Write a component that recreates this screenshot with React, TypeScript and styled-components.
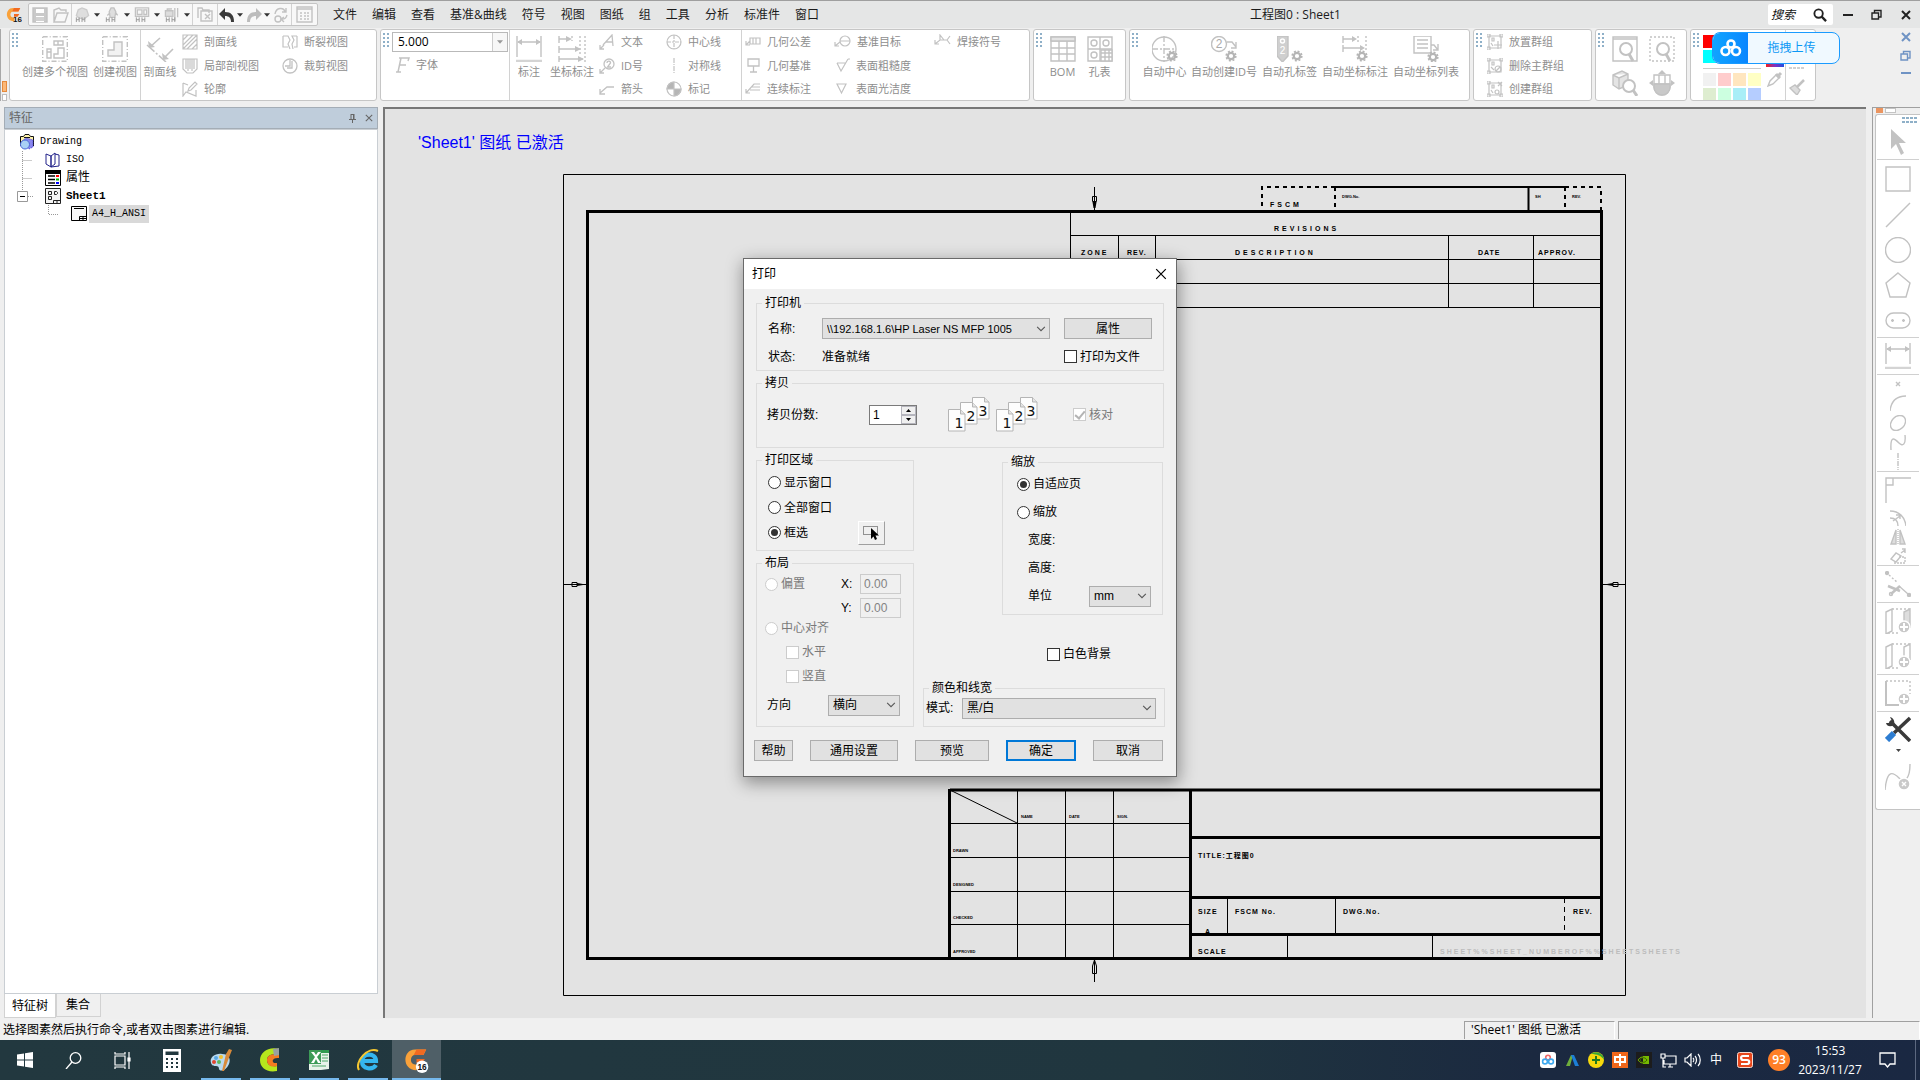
import React from "react";
import styled, { createGlobalStyle } from "styled-components";

const ui = `"Open Sans", "Noto Sans CJK SC", sans-serif`;
const dlg = `"Liberation Sans", "Noto Sans CJK SC", sans-serif`;
const song = `"Liberation Mono", "Noto Sans CJK SC", monospace`;

const Global = createGlobalStyle`
  * { box-sizing: border-box; }
  body { margin: 0; font: 12px/16px ${ui}; color: #1b1b1b; background: #efefef; overflow: hidden; }
  button, input, select { font: inherit; color: inherit; margin: 0; }
  svg { display: block; flex: none; }
  h1, h2, p { margin: 0; font: inherit; }
`;

const Window = styled.div`
  display: flex;
  flex-direction: column;
  height: 100vh;
`;

/* ---------- top bar ---------- */

const TopBar = styled.header`
  display: flex;
  align-items: center;
  height: 28px;
  flex: none;
  border-top: 1px solid #9f9f9f;
  background: #e5e6e6;
`;
const Logo = styled.div`
  padding: 0 6px;
`;
const QuickBar = styled.div`
  display: flex;
  align-items: center;
  width: 290px;
  height: 23px;
  border: 1px solid #c4c4c4;
  border-radius: 2px;
  background: #f8f8f8;
`;
const QuickButton = styled.button<{ $w: number }>`
  display: flex;
  align-items: center;
  justify-content: center;
  width: ${(p) => p.$w}px;
  height: 21px;
  padding: 0;
  border: 0;
  background: none;
`;
const Rule = styled.i`
  width: 1px;
  align-self: stretch;
  background: #d2d2d2;
  flex: none;
`;
const Menu = styled.nav`
  display: flex;
  gap: 15px;
  padding-left: 15px;
`;
const MenuLink = styled.a`
  color: #1b1b1b;
  text-decoration: none;
  white-space: nowrap;
`;
const DocTitle = styled.h1`
  flex: 1;
  padding-left: 4px;
  text-align: center;
`;
const SearchBox = styled.label`
  display: flex;
  align-items: center;
  width: 65px;
  height: 21px;
  border-radius: 2px;
  background: #fff;
  input {
    width: 45px;
    padding: 0 3px;
    border: 0;
    background: none;
    font-style: italic;
    outline: 0;
  }
  input::placeholder { color: #111; opacity: 1; }
`;
const WinButton = styled.button`
  display: flex;
  align-items: center;
  justify-content: center;
  width: 29px;
  height: 20px;
  padding: 0;
  border: 0;
  background: none;
`;

/* ---------- ribbon ---------- */

const Ribbon = styled.section`
  position: relative;
  display: flex;
  gap: 3px;
  height: 76px;
  flex: none;
  padding: 1px 0 3px;
  background: #efefef;
`;
const Rail = styled.div`
  display: flex;
  flex-direction: column;
  justify-content: flex-end;
  gap: 2px;
  width: 6px;
  padding-left: 1px;
  border-left: 1px solid #a8a8a8;
`;
const RailMark = styled.i<{ $hot?: boolean }>`
  height: ${(p) => (p.$hot ? 11 : 7)}px;
  width: 5px;
  border: 1px solid ${(p) => (p.$hot ? "#e58a3c" : "#bdbdbd")};
  background: ${(p) => (p.$hot ? "#fbb878" : "#fff")};
`;
const Group = styled.div<{ $w: number }>`
  display: flex;
  width: ${(p) => p.$w}px;
  flex: none;
  padding-left: 2px;
  border: 1px solid #c6c6c6;
  border-radius: 3px;
  background: #fff;
  overflow: hidden;
`;
const BigTool = styled.button<{ $w: number }>`
  display: flex;
  flex-direction: column;
  align-items: center;
  gap: 3px;
  width: ${(p) => p.$w}px;
  flex: none;
  padding: 6px 0 0;
  border: 0;
  background: none;
  font-size: 11px;
  line-height: 14px;
  color: #8e8e8e;
  white-space: nowrap;
`;
const ToolGrid = styled.div<{ $cols: string }>`
  display: grid;
  grid-template-columns: ${(p) => p.$cols};
  grid-template-rows: 24px 23px 24px;
  grid-auto-flow: column;
  margin-left: 3px;
`;
const SmallTool = styled.button`
  display: flex;
  align-items: center;
  gap: 6px;
  padding: 0;
  border: 0;
  background: none;
  font-size: 11px;
  line-height: 14px;
  color: #8e8e8e;
  white-space: nowrap;
`;
const FontColumn = styled.div`
  width: 118px;
  padding: 2px 1px;
`;
const SizeBox = styled.label`
  display: flex;
  align-items: center;
  height: 20px;
  border: 1px solid #b9b9b9;
  input {
    flex: 1;
    min-width: 0;
    padding: 0 5px;
    border: 0;
    outline: 0;
    color: #000;
  }
  button {
    align-self: stretch;
    display: flex;
    align-items: center;
    justify-content: center;
    width: 15px;
    padding: 0;
    border: 0;
    border-left: 1px solid #ccc;
    background: #f7f7f7;
  }
`;
const FontTool = styled(SmallTool)`
  height: 26px;
  padding-left: 2px;
`;
const ViewGrid = styled.div`
  display: grid;
  grid-template-columns: 37px 37px;
  grid-template-rows: 34px 34px;
  justify-items: center;
  align-items: center;
  padding-top: 2px;
`;
const PlainButton = styled.button`
  display: flex;
  padding: 0;
  border: 0;
  background: none;
`;
const Palette = styled.div`
  display: grid;
  grid-template-columns: repeat(4, 13px);
  grid-template-rows: 13px 13px 6px 13px 13px;
  gap: 2px;
  align-content: start;
  padding: 5px 3px 0 2px;
`;
const Swatch = styled.button<{ $c: string }>`
  padding: 0;
  border: 0;
  background: ${(p) => p.$c};
`;
const PaletteRule = styled.i`
  grid-column: 1 / -1;
  align-self: center;
  height: 1px;
  background: #c9c9c9;
`;
const PaletteTools = styled.div`
  display: flex;
  flex-direction: column;
  align-items: center;
  justify-content: flex-end;
  gap: 4px;
  width: 21px;
  padding-bottom: 13px;
`;
const BrushTools = styled(PaletteTools)`
  gap: 9px;
  padding-bottom: 5px;
`;
const Spectrum = styled.i`
  width: 18px;
  height: 6px;
  background: linear-gradient(90deg, #f02020, #8030c0, #2050e0);
`;
const MdiButtons = styled.div`
  display: flex;
  flex-direction: column;
  justify-content: space-between;
  margin-left: auto;
  height: 52px;
`;
const MdiButton = styled(WinButton)`
  height: 16px;
`;
const Upload = styled.button`
  position: absolute;
  top: 4px;
  right: 80px;
  display: flex;
  align-items: center;
  width: 128px;
  height: 32px;
  padding: 0;
  border: 1px solid #1a9bff;
  border-radius: 8px;
  overflow: hidden;
  background: #f0f9ff;
  color: #0b98f5;
  span { flex: 1; padding-right: 4px; }
`;
const UploadMark = styled.i`
  display: flex;
  align-items: center;
  justify-content: center;
  width: 35px;
  height: 32px;
  background: linear-gradient(90deg, #10a5ff, #0a86ff);
`;

/* ---------- docks and canvas ---------- */

const Main = styled.main`
  display: grid;
  grid-template-columns: 379px minmax(0, 1fr) 48px;
  flex: 1;
  min-height: 0;
  padding: 3px 0 1px 4px;
`;
const FeatureDock = styled.aside`
  display: flex;
  flex-direction: column;
  min-height: 0;
  margin-right: 5px;
`;
const DockHead = styled.div`
  display: flex;
  align-items: center;
  gap: 8px;
  height: 22px;
  padding: 0 4px;
  border: 1px solid #a4adb6;
  background: #bfcddb;
  color: #666;
  h2 { flex: 1; }
`;
const TreePane = styled.div`
  flex: 1;
  padding: 3px 0 0 12px;
  border: 1px solid #c9ced3;
  background: #fff;
  font-family: ${song};
  font-size: 10px;
  color: #000;
`;
const TreeRow = styled.div<{ $root?: boolean }>`
  display: flex;
  align-items: center;
  gap: 2px;
  height: 18px;
  padding-left: ${(p) => (p.$root ? 2 : 0)}px;
`;
const TreeLabel = styled.span<{ $bold?: boolean; $on?: boolean; $cjk?: boolean }>`
  padding: 0 3px;
  line-height: 18px;
  font-size: ${(p) => (p.$cjk ? 12 : p.$bold ? 11 : 10)}px;
  font-weight: ${(p) => (p.$bold ? 700 : 400)};
  background: ${(p) => (p.$on ? "#d9d9d9" : "none")};
`;
const Tabs = styled.div`
  display: flex;
  align-items: flex-start;
  height: 24px;
`;
const Tab = styled.button<{ $on?: boolean }>`
  height: ${(p) => (p.$on ? 24 : 23)}px;
  padding: 0 7px;
  border: 1px solid #d2d2d2;
  border-top: 0;
  background: ${(p) => (p.$on ? "#fff" : "#f0f0f0")};
  color: #000;
  & + & { padding: 0 10px 0 9px; }
`;
const Canvas = styled.section`
  display: grid;
  grid-template: minmax(0, 1fr) / minmax(0, 1fr);
  margin-right: 6px;
  border-top: 2px solid #777;
  border-left: 2px solid #777;
  background: #e3e3e3;
  & > * { grid-area: 1 / 1; }
`;
const ActiveNote = styled.p`
  padding: 24px 33px;
  font: 16px/20px ${dlg};
  color: #00f;
`;
const Sheet = styled.svg`
  width: 100%;
  height: 100%;
  overflow: hidden;
`;
const Lettering = styled.text<{ $track?: number; $tiny?: boolean; $faint?: boolean }>`
  font: ${(p) => (p.$tiny ? "bold 4px" : "bold 7px")} ${dlg};
  letter-spacing: ${(p) => p.$track || 0}px;
  fill: ${(p) => (p.$faint ? "#bcbcbc" : "#000")};
`;
const SketchDock = styled.aside`
  display: flex;
  flex-direction: column;
  border-top: 1px solid #a0a0a0;
  border-left: 1px solid #a0a0a0;
`;
const DockTabs = styled.div`
  display: flex;
  gap: 2px;
  height: 6px;
  padding-left: 3px;
`;
const DockTab = styled.i<{ $hot?: boolean }>`
  width: ${(p) => (p.$hot ? 7 : 11)}px;
  height: 5px;
  border: 1px solid ${(p) => (p.$hot ? "#eb9560" : "#c4c4c4")};
  background: ${(p) => (p.$hot ? "#eb9560" : "#fff")};
`;
const SketchPanel = styled.div`
  display: flex;
  flex-direction: column;
  align-items: center;
  margin-left: 2px;
  height: 696px;
  border: 1px solid #c4c4c4;
  border-right: 0;
  border-radius: 3px 0 0 3px;
  background: #fff;
`;
const SketchGrip = styled.div`
  align-self: flex-end;
  padding: 2px 2px 0 0;
`;
const SketchTool = styled.button<{ $h: number }>`
  display: flex;
  align-items: center;
  justify-content: center;
  width: 42px;
  height: ${(p) => p.$h}px;
  padding: 0;
  border: 0;
  background: none;
`;
const SketchRule = styled.i`
  width: 42px;
  height: 1px;
  background: #d0d0d0;
`;

/* ---------- status bar and taskbar ---------- */

const StatusBar = styled.footer`
  display: flex;
  align-items: center;
  gap: 3px;
  height: 21px;
  flex: none;
  padding-top: 1px;
  color: #000;
  background: #f0f0f0;
  p { flex: 1; padding-left: 3px; }
`;
const StatusCell = styled.div<{ $w: number }>`
  width: ${(p) => p.$w}px;
  height: 18px;
  padding-left: 6px;
  border-top: 1px solid #a0a0a0;
  border-left: 1px solid #a0a0a0;
  border-right: 1px solid #fff;
`;
const Taskbar = styled.div`
  display: flex;
  align-items: center;
  height: 40px;
  flex: none;
  background: linear-gradient(90deg, #22383f, #20363f 60%, #1b2940 80%, #1a2842);
  color: #fff;
`;
const Task = styled.button<{ $open?: boolean; $on?: boolean }>`
  display: flex;
  align-items: center;
  justify-content: center;
  width: 49px;
  height: 40px;
  padding: 0;
  border: 0;
  background: ${(p) =>
    p.$on
      ? "linear-gradient(#76b9ed, #76b9ed) bottom / 100% 2px no-repeat #4f5f67"
      : p.$open
        ? "linear-gradient(#76b9ed, #76b9ed) bottom / 40px 2px no-repeat"
        : "none"};
`;
const Tray = styled.div`
  display: flex;
  align-items: center;
  margin-left: auto;
  height: 40px;
`;
const TrayButton = styled.button<{ $w?: number }>`
  display: flex;
  align-items: center;
  justify-content: center;
  width: ${(p) => p.$w || 24}px;
  height: 40px;
  padding: 0;
  border: 0;
  background: none;
  color: #fff;
`;
const Badge = styled.span`
  width: 22px;
  height: 22px;
  border-radius: 11px;
  background: #ff7f27;
  line-height: 22px;
  font-weight: 600;
`;
const Clock = styled.time`
  width: 68px;
  text-align: center;
  line-height: 19px;
`;
const ShowDesktop = styled.i`
  width: 5px;
  height: 40px;
  margin-left: 5px;
  border-left: 1px solid #5c6880;
`;

/* ---------- print dialog ---------- */

const Dialog = styled.form`
  position: absolute;
  left: calc(50% - 217px);
  top: 258px;
  width: 434px;
  border: 1px solid #6a6a6a;
  background: #f0f0f0;
  box-shadow: 1px 5px 16px 1px rgba(0, 0, 0, 0.38);
  font-family: ${dlg};
  color: #000;
`;
const DialogHead = styled.div`
  display: flex;
  align-items: center;
  justify-content: space-between;
  height: 30px;
  padding: 0 9px 0 8px;
  background: #fff;
`;
const DialogBody = styled.div`
  display: flex;
  flex-direction: column;
  gap: 5px;
  padding: 7px 12px 0;
`;
const Box = styled.fieldset`
  min-width: 0;
  margin: 0;
  padding: 0;
  border: 1px solid #dcdcdc;
  legend {
    height: 14px;
    margin-left: 5px;
    padding: 0 3px;
    line-height: 14px;
  }
`;
const PrinterGrid = styled.div`
  display: grid;
  grid-template-columns: 54px 228px 102px;
  grid-template-rows: 21px 21px;
  row-gap: 7px;
  align-items: center;
  padding: 8px 0 3px 11px;
  & > :nth-child(3n) { margin-left: 14px; }
`;
const CopyRow = styled.div`
  display: flex;
  align-items: center;
  height: 57px;
  padding: 0 0 8px 10px;
`;
const CopyLabel = styled.label`
  width: 102px;
`;
const Spinner = styled.span`
  display: flex;
  width: 48px;
  height: 20px;
  margin-right: 31px;
  border: 1px solid #7a7a7a;
  background: #fff;
  input {
    width: 31px;
    padding: 0 3px;
    border: 0;
    outline: 0;
    background: none;
  }
`;
const SpinButtons = styled.span`
  display: grid;
  grid-template-rows: 9px 9px;
  width: 15px;
  button {
    display: flex;
    align-items: center;
    justify-content: center;
    padding: 0;
    border: 1px solid #b5b5bd;
    background: #f0f0f0;
  }
`;
const Collate = styled.div`
  display: flex;
  gap: 6px;
  width: 125px;
`;
const Columns = styled.div`
  display: flex;
  justify-content: space-between;
  margin-right: -1px;
`;
const LeftColumn = styled.div`
  display: flex;
  flex-direction: column;
  gap: 5px;
  width: 158px;
`;
const RightColumn = styled.div`
  display: flex;
  flex-direction: column;
  justify-content: space-between;
  width: 242px;
  padding-top: 2px;
`;
const AreaRows = styled.div`
  display: grid;
  grid-template: repeat(3, 25px) / 90px 27px;
  align-items: center;
  padding: 3px 0 5px 11px;
  & > label { grid-column: 1; }
`;
const PickButton = styled.button`
  display: flex;
  align-items: center;
  justify-content: center;
  width: 27px;
  height: 24px;
  padding: 0;
  border: 1px solid #fff;
  border-right-color: #a0a0a0;
  border-bottom-color: #a0a0a0;
  background: #f0f0f0;
`;
const LayoutRows = styled.div`
  display: grid;
  grid-template: 24px 24px 16px 32px 16px 42px / 61px 15px 19px 41px;
  align-items: center;
  padding: 2px 0 0 8px;
`;
const Cell = styled.div<{ $at: string; $pad?: number }>`
  grid-area: ${(p) => p.$at};
  padding-left: ${(p) => p.$pad || 0}px;
`;
const NumberBox = styled.input`
  width: 41px;
  height: 20px;
  padding: 0 3px;
  border: 1px solid #cccccc;
  background: #f0f0f0;
  &:disabled { color: #838383; }
`;
const ScaleBox = styled(Box)`
  align-self: flex-end;
  width: 161px;
  margin-right: 2px;
`;
const ScaleRows = styled.div`
  display: grid;
  grid-template: repeat(5, 28px) / 61px 62px;
  align-items: center;
  padding: 1px 0 4px 25px;
`;
const ScaleRadio = styled.div`
  grid-column: 1 / -1;
  margin-left: -11px;
`;
const WhiteRow = styled.div`
  padding: 12px 0 0 124px;
`;
const ModeRow = styled.div`
  display: flex;
  align-items: center;
  justify-content: space-between;
  height: 31px;
  padding: 0 8px 5px 2px;
`;
const Choice = styled.label<{ $off?: boolean }>`
  display: flex;
  align-items: center;
  gap: 3px;
  white-space: nowrap;
  color: ${(p) => (p.$off ? "#7a7a7a" : "#000")};
  input {
    appearance: none;
    display: grid;
    place-items: center;
    width: 13px;
    height: 13px;
    flex: none;
    border: 1px solid ${(p) => (p.$off ? "#cccccc" : "#333")};
    background: #fff;
  }
  input[type="radio"] { border-radius: 7px; }
  input[type="radio"]:checked::after {
    content: "";
    width: 7px;
    height: 7px;
    border-radius: 4px;
    background: #333;
  }
  input[type="checkbox"]:checked::after {
    content: "";
    width: 4px;
    height: 8px;
    margin-bottom: 2px;
    border: solid #b4b4b4;
    border-width: 0 2px 2px 0;
    transform: rotate(40deg);
  }
`;
const SelectWrap = styled.span<{ $w: number; $size: number }>`
  display: grid;
  align-items: center;
  width: ${(p) => p.$w}px;
  select, svg { grid-area: 1 / 1; }
  select {
    appearance: none;
    width: 100%;
    height: 21px;
    padding: 0 18px 0 4px;
    border: 1px solid #adadad;
    border-radius: 0;
    background: #e1e1e1;
    font-size: ${(p) => p.$size}px;
  }
  svg { justify-self: end; margin-right: 4px; pointer-events: none; }
`;
const DialogButton = styled.button<{ $w: number; $main?: boolean }>`
  width: ${(p) => p.$w}px;
  height: 21px;
  padding: 0;
  line-height: 16px;
  border: ${(p) => (p.$main ? "2px solid #0078d7" : "1px solid #adadad")};
  background: #e1e1e1;
`;
const DialogFoot = styled.div`
  display: flex;
  gap: 17px;
  padding: 13px 9px 15px 10px;
`;

/* ---------- drawings ---------- */

const G = "#c2c2c2";
type IconProps = { w?: number; h?: number; vb?: string; c?: string; s?: number; children: React.ReactNode };
const Icon = ({ w = 26, h, vb, c = G, s = 1.4, children }: IconProps) => (
  <svg width={w} height={h || w} viewBox={vb || `0 0 ${w} ${h || w}`} fill="none" stroke={c} strokeWidth={s} aria-hidden="true">
    {children}
  </svg>
);
const Gear = ({ x, y }: { x: number; y: number }) => (
  <g transform={`translate(${x} ${y})`} stroke="#b5b5b5">
    <circle r="3.2" strokeWidth="2.2" />
    <circle r="4.8" strokeWidth="1.6" strokeDasharray="2 1.77" />
  </g>
);
const Drop = ({ c = "#333" }: { c?: string }) => (
  <svg width="6" height="4" viewBox="0 0 7 4" aria-hidden="true">
    <path d="M0 0h7L3.5 4z" fill={c} />
  </svg>
);
const Chevron = () => (
  <Icon w={10} h={6} vb="0 0 11 7" c="#555" s={1.2}>
    <path d="M1 1l4.5 4.5L10 1" />
  </Icon>
);
const Grip = () => (
  <svg width="8" height="20" viewBox="0 0 8 20" fill="#8fb0c8" aria-hidden="true">
    {[4, 8, 12, 16].map((y) => (
      <path key={y} d={`M0 ${y - 1}h2v2h-2zM4 ${y - 1}h2v2h-2z`} />
    ))}
  </svg>
);
const Restore = ({ c }: { c: string }) => (
  <Icon w={11} c={c} s={1.4}>
    <path d="M1 4h6.500v6H1zM3.500 4V1.500H10V8H7.500" />
  </Icon>
);
const Cross = ({ c, w = 10, s = 2 }: { c: string; w?: number; s?: number }) => (
  <Icon w={w} vb="0 0 10 10" c={c} s={s}>
    <path d="M1 1l8 8M9 1L1 9" />
  </Icon>
);
const Dash = ({ c }: { c: string }) => (
  <Icon w={10} c={c} s={2}>
    <path d="M0 5h10" />
  </Icon>
);
const BrandMark = ({ size, text, light }: { size: number; text: string; light?: boolean }) => (
  <svg width={size} height={size} viewBox="0 0 18 18" aria-hidden="true">
    <path d="M16 1H8C3 1 1 5 1 8.500S3.500 16 9 16v-4c-3 0-4-1.500-4-3.500S6 5 8 5h6z" fill="#f9a13a" />
    <path d="M16 1H9L7 5h7zM9 8h6l-2 3H9z" fill="#f26a21" />
    {light && <circle cx="13" cy="13.500" r="4.500" fill="#fff" />}
    <text x="13" y={light ? 15.6 : 16.5} fontSize={light ? 6 : 9} fontWeight="700" fontFamily="Liberation Sans, sans-serif" textAnchor="middle" fill="#111">
      {text}
    </text>
  </svg>
);

const bins = <path d="M2 11v5M5 11v5M2 13.500h3M8 11v5M11 11v5M8 13.500h3" stroke="#999" strokeWidth="1" />;
const quick: Record<string, React.ReactNode> = {
  save: <Icon w={16}><path d="M1 1h14v14H1z" fill="#c9c9c9" /><path d="M4 2h8v4H4zM4 9h8v6H4z" fill="#fff" stroke="none" /><path d="M4 11h8M4 13h8" /></Icon>,
  open: <Icon w={16}><path d="M1 15V3l5-2 2 2h5v2M1 15l3-9h11l-3 9z" /></Icon>,
  part: <Icon w={16} vb="0 0 16 17"><path d="M2 9l2-6 4-2 5 2 2 6-4 3H5z" fill="#dedede" stroke="#ccc" />{bins}</Icon>,
  part2: <Icon w={16} vb="0 0 16 17"><path d="M5 5l2-4h3l2 4-1 6H6zM3 9l3-3M14 9l-2-3" fill="#dedede" />{bins}</Icon>,
  sheet: <Icon w={16} vb="0 0 16 17"><path d="M1 1h14v9H1zM3 3h5v5H3zM10 3h3v5h-3z" />{bins}</Icon>,
  asm: <Icon w={16} vb="0 0 16 17"><path d="M1 4h8v6H1zM3 4V2h5M11 1v14M14 1v10" fill="#ddd" />{bins}</Icon>,
  clear: <Icon w={17}><path d="M1 12V2h4l1 2h6v3M4 15V5h11v10z" /><path d="M8 8l5 5M13 8l-5 5" /></Icon>,
};

const UndoArrow = ({ c, flip }: { c: string; flip?: boolean }) => (
  <svg width="16" height="16" viewBox="0 0 16 16" aria-hidden="true">
    <g transform={flip ? "matrix(-1 0 0 1 16 0)" : undefined}>
      <path d="M6 1v4c6 0 9 3 9 10h-3c0-4-2-6-6-6v4L0 7z" fill={c} />
    </g>
  </svg>
);

const big: Record<string, React.ReactNode> = {
  multi: <Icon><path d="M.7.7h24.600v24.600H.7z" strokeDasharray="5 2 1 2" /><path d="M12 5h9v4h-9zM16 5v4M5 13h4v9H5zM5 16h4M12 18h4v-6h6v10H12z" /></Icon>,
  single: <Icon><path d="M.7.7h24.600v24.600H.7z" strokeDasharray="5 2 1 2" /><path d="M6 20v-6h6V6h8v14z" fill="#f2f2f2" /></Icon>,
  section: <Icon w={28} h={26} s={1.600}><path d="M1 9l19 17" strokeDasharray="10 2 2 2" /><path d="M14 2L4 11M27 13l-9 9" /><path d="M2 5l1 7 6-1zM16 17l1 7 6-1z" fill={G} stroke="none" /></Icon>,
  dim: <Icon><path d="M1 0v21M25 0v21M2 6h22" /><path d="M1 6l5-3v6zM25 6l-5-3v6z" fill={G} stroke="none" /><path d="M0 25h26" stroke="#d4d4d4" strokeWidth="2.500" /></Icon>,
  ordinate: <Icon w={28} h={26}><path d="M1 0v7M1 10v7M1 20v6M1 3h11M1 13h19M1 23h24" /><path d="M8 0l6 3-6 3zM17 10l6 3-6 3zM20 20l6 3-6 3z" fill={G} stroke="none" /><path d="M14 0v5M22 0v20M27 0v26" strokeDasharray="2 2" /></Icon>,
  bom: <Icon><path d="M1 1h24v24H1zM1 5h24M9 1v24M17 1v24M1 12h24M1 18h24" /><path d="M1 1h24v4H1z" fill="#e4e4e4" /></Icon>,
  hole: <Icon><path d="M1 1h24v24H1zM13 1v24M1 13h24" /><circle cx="7" cy="7" r="3" /><circle cx="19" cy="7" r="3" /><circle cx="7" cy="19" r="3" /><path d="M14 14h11v11H14zM14 17h11M14 21h11M18 14v11M22 14v11" fill="#fff" /></Icon>,
  center: <Icon><circle cx="12" cy="13" r="12" /><path d="M12 0v26M0 13h24" strokeDasharray="6 2 2 2" /><Gear x={20} y={20} /></Icon>,
  idno: <Icon><circle cx="8" cy="8" r="7.500" /><text x="8" y="12" fontSize="12" textAnchor="middle" fontFamily="Liberation Sans, sans-serif" stroke="none" fill="#aaa">2</text><path d="M16 6h5l4 5M25 6v6h-5" /><Gear x={20} y={20} /></Icon>,
  tag: <Icon><path d="M0 0h11v20l-5.500 6L0 20z" fill="#cfcfcf" /><circle cx="5.500" cy="5" r="2" stroke="#fff" /><text x="5.500" y="18" fontSize="10" textAnchor="middle" fontFamily="Liberation Sans, sans-serif" stroke="none" fill="#fff">2</text><Gear x={20} y={20} /></Icon>,
  autoord: <Icon><path d="M1 0v7M1 9v7M1 3h11M1 12h19" /><path d="M10 0l5 3-5 3zM18 9l5 3-5 3z" fill={G} stroke="none" /><path d="M16 0v6M24 0v15" strokeDasharray="2 2" /><Gear x={20} y={20} /></Icon>,
  autolist: <Icon><path d="M1 0h17v17H1zM4 4h11M4 8h11M4 12h11M18 9h3l4 5M25 8v6h-5" /><Gear x={20} y={21} /></Icon>,
};

const small: Record<string, React.ReactNode> = {
  hatch: <Icon w={16} s={1.200}><path d="M1 1h14v14H1zM1 6l5-5M1 11L11 1M1 15L15 1M5 15L15 5M10 15l5-5" /></Icon>,
  local: <Icon w={16} s={1.200}><path d="M1 1h14v10l-4 4H5l-4-4zM4 1v10M6 1v12M8 1v10M10 1v12M12 1v10" /></Icon>,
  outline: <Icon w={16} s={1.200}><path d="M1 2l5 2M1 2v13l3-4 10 4V9M6 10l1-3 6-6 2 2-6 6z" /></Icon>,
  broken: <Icon w={16} s={1.200}><path d="M1 2h5l2 4-2 4 2 5M15 2h-5l2 4-2 4 1 5M1 2v11h5M15 2v11h-3" /></Icon>,
  crop: <Icon w={16} s={1.300}><circle cx="8" cy="8" r="7" /><path d="M8 2v6H3M10 3v7H5" /></Icon>,
  text: <Icon w={16} s={1.300}><path d="M4 11L13 1l1 11M7 8h7M1 15l4-4M1 11v4h4" /></Icon>,
  id: <Icon w={16} s={1.300}><circle cx="10" cy="6" r="5" /><path d="M8 5c0-3 4-2 3.500 0L8.500 9H12M6 10l-5 5M1 11v4h4" /></Icon>,
  arrow: <Icon w={16} s={1.300}><path d="M15 6H8l-7 6M1 8v5h5" /></Icon>,
  centerline: <Icon w={16} s={1.200}><circle cx="8" cy="8" r="7" /><path d="M8 1v14M1 8h14" strokeDasharray="4 1 2 1" /></Icon>,
  sym: <Icon w={16} s={1.200}><path d="M8 0v16" strokeDasharray="5 1 1 1" /></Icon>,
  mark: <Icon w={16} s={1.200}><circle cx="8" cy="8" r="7" /><path d="M8 1v7H1a7 7 0 0 1 7-7zM8 15V8h7a7 7 0 0 1-7 7z" fill="#b5b5b5" /></Icon>,
  gtol: <Icon w={16} s={1.200}><path d="M5 4h10v6H5zM8 4v6M11 4v6M5 7L1 11M1 7v4h4" /></Icon>,
  datum: <Icon w={16} s={1.300}><path d="M3 1h11v7H3zM8.500 8v6M5 14h7" /></Icon>,
  chain: <Icon w={16} s={1.200}><path d="M15 3H9l-8 9M15 6H7M15 9H5M1 8v4h4" /></Icon>,
  target: <Icon w={17} h={16} s={1.200}><circle cx="11" cy="7" r="5" /><path d="M6 7h10M6 8l-5 4M1 8v4h4" /></Icon>,
  rough: <Icon w={16} s={1.200}><path d="M3 5h9M3 5l4 8 7-12M16 1h-2" /></Icon>,
  finish: <Icon w={16} s={1.200}><path d="M3 3h9L7.500 12z" /></Icon>,
  weld: <Icon w={17} h={16} s={1.200}><path d="M1 10l5-4h7l3-4M13 6l3 4M6 6V1l4 5M1 6v4h4" /></Icon>,
  place: <Icon w={16} s={1.200}><path d="M2 2h12v12H2z" /><path d="M0 0h3v3H0zM13 0h3v3h-3zM0 13h3v3H0zM5 4h2v3H5zM4 9l2 3M11 7v8M7 11h8" /></Icon>,
  remove: <Icon w={16} s={1.200}><path d="M2 2h12v12H2z" /><path d="M0 0h3v3H0zM13 0h3v3h-3zM0 13h3v3H0zM5 4h2v3H5zM4 9l3 3" /><circle cx="11" cy="11" r="3" /><path d="M9 13l4-4" /></Icon>,
  create: <Icon w={16} s={1.200}><path d="M2 2h12v12H2z" /><path d="M0 0h3v3H0zM0 13h3v3H0zM13 13h3v3h-3zM5 4h2v3H5zM4 9l2 3M11 1l4 4M15 1l-4 4" /><circle cx="10" cy="11" r="2" /></Icon>,
};

const Big = ({ w, icon, children }: { w: number; icon: string; children: React.ReactNode }) => (
  <BigTool type="button" $w={w}>
    {big[icon]}
    <span>{children}</span>
  </BigTool>
);
const Small = ({ icon, children }: { icon: string; children: React.ReactNode }) => (
  <SmallTool type="button">
    {small[icon]}
    <span>{children}</span>
  </SmallTool>
);

/* Title block and frame of the A4 template, in screen units. */
const thick = "M587.500 211.500H1601.500V958.500H587.500zM950 790H1601M949.500 789V958M1190.500 790V958M1191 837.500H1601M1191 897.500H1601M1191 934.500H1601";
const thin =
  "M563.500 174.500H1625.500V995.500H563.500z" +
  "M1070.500 212V307.500H1601M1070.500 235.500H1601M1070.500 259.500H1601M1070.500 283.500H1601M1118.500 235V307M1155.500 235V307M1448.500 235V307M1533.500 235V307" +
  "M950 823.500H1191M950 857.500H1191M950 891.500H1191M950 924.500H1191M1017.500 790V958M1065.500 790V958M1113.500 790V958M950 790L1017 823" +
  "M1227.500 898V934M1335.500 898V934M1287.500 935V958M1432.500 935V958" +
  "M1094.500 187V211M1094.500 960V982M563 584.500H588M1602 584.500H1626";
const letters: [string, number, number, number][] = [
  ["FSCM", 1270, 207, 3], ["REVISIONS", 1274, 231, 3], ["ZONE", 1081, 255, 2], ["REV.", 1127, 255, 1],
  ["DESCRIPTION", 1235, 255, 3], ["DATE", 1478, 255, 1], ["APPROV.", 1538, 255, 1],
  ["TITLE:工程图0", 1198, 858, 1], ["SIZE", 1198, 914, 1], ["FSCM No.", 1235, 914, 1], ["DWG.No.", 1343, 914, 1],
  ["REV.", 1573, 914, 1], ["A", 1205, 934, 0], ["SCALE", 1198, 954, 1],
];
const tiny: [string, number, number][] = [
  ["DWG.No.", 1342, 198], ["SH", 1535, 198], ["REV.", 1572, 198], ["NAME", 1021, 818], ["DATE", 1069, 818], ["SIGN.", 1117, 818],
  ["DRAWN", 953, 852], ["DESIGNED", 953, 886], ["CHECKED", 953, 919], ["APPROVED", 953, 953],
];
const SheetDrawing = () => (
  <Sheet aria-label="A4_H_ANSI">
    <g transform="translate(-385 -109)" fill="none" stroke="#000">
      <path d={thin} />
      <path d={thick} strokeWidth="3" />
      <path d="M1335 187H1565M1528.500 187V211" strokeWidth="2" />
      <path d="M1262 206V187H1335M1335 187V211M1565 187V211M1565 187H1601V211" strokeWidth="2" strokeDasharray="4 4" />
      <path d="M1564.500 898V934" strokeDasharray="5 4" />
      <path d="M1092.500 196.500h4v5h-4zM1092.500 973.500h4V966l-2-6-2 6zM572 582.500h5v4h-5zM1613 582.500h5v4h-5z" />
      <path d="M1092.500 202h4l-1 6h-2zM577 583l9 1.500-9 1.500zM1613 583l-9 1.500 9 1.500z" fill="#000" stroke="none" />
      <g stroke="none">
        {letters.map(([t, x, y, k]) => <Lettering key={t + x} x={x} y={y} $track={k}>{t}</Lettering>)}
        {tiny.map(([t, x, y]) => <Lettering key={t + x} x={x} y={y} $tiny>{t}</Lettering>)}
        <Lettering x={1440} y={954} $track={2} $faint>SHEET%%SHEET_NUMBEROF%%SHEETSSHEETS</Lettering>
      </g>
    </g>
  </Sheet>
);

const Plus = ({ x, y }: { x: number; y: number }) => (
  <g transform={`translate(${x} ${y})`}>
    <circle r="6" fill="#c9c9c9" stroke="#fff" />
    <path d="M-4 0h8M0-4v8" stroke="#fff" strokeWidth="2" />
  </g>
);
type SketchItem = { h: number; n?: string; d?: React.ReactNode; w?: number; vh?: number };
const sketch: SketchItem[] = [
  { h: 35, n: "选择", w: 16, vh: 26, d: <path d="M1 0v20l5-5 5 11 3-2-5-10h7z" fill={G} stroke="none" /> },
  { h: 0 },
  { h: 37, n: "矩形", d: <path d="M1 1h24v24H1z" /> },
  { h: 35, n: "直线", d: <path d="M1 25L25 1" /> },
  { h: 35, n: "圆", d: <circle cx="13" cy="13" r="12.500" /> },
  { h: 36, n: "多边形", d: <path d="M13 1l12 10-4 14H5L1 11z" /> },
  { h: 34, n: "槽", vh: 17, d: <><rect x="1" y="1" width="24" height="15" rx="7.500" /><path d="M6 8.500h3M7.500 7v3M17 8.500h3M18.500 7v3" /></> },
  { h: 0 },
  { h: 36, n: "尺寸", d: big.dim },
  { h: 0 },
  { h: 18, n: "点", w: 6, vh: 6, d: <path d="M1 1l4 4M5 1L1 5" /> },
  { h: 20, n: "圆弧", w: 16, vh: 16, d: <path d="M0 16C1 7 6 1 16 1" /> },
  { h: 19, n: "椭圆", w: 16, vh: 16, d: <ellipse cx="8" cy="8" rx="8.500" ry="6.500" transform="rotate(-45 8 8)" /> },
  { h: 19, n: "样条", w: 16, vh: 16, d: <path d="M1 16C0 0 5 5 9 9s7 1 6-8" /> },
  { h: 20, n: "中心线", w: 8, vh: 17, d: <path d="M4 0v17" strokeDasharray="5 1 1 1" /> },
  { h: 0 },
  { h: 36, n: "倒角", d: <path d="M1 26V1h25M1 8h7V1" /> },
  { h: 19, n: "偏移", w: 16, vh: 16, d: <path d="M0 1c9 0 15 6 16 15M0 8c5 0 8 3 8 8M3 11l7-5M6 5h4v4" /> },
  { h: 19, n: "镜像", w: 16, vh: 16, d: <><path d="M6 1v14H1zM10 1v14h5z" fill="#ddd" /><path d="M8 0v16" strokeDasharray="1 1" /></> },
  { h: 19, n: "旋转", w: 16, vh: 16, d: <><path d="M1 11l5-6 5 3-5 6z" /><path d="M4 15h11V9H8" strokeDasharray="2 1" /><path d="M11 5l4-3M12 1h3v4" /></> },
  { h: 0 },
  { h: 36, n: "修剪", d: <><circle cx="2" cy="2" r="1.500" fill={G} /><circle cx="24" cy="24" r="1.500" fill={G} /><path d="M4 4l9 8" strokeDasharray="2 2" /><path d="M14 15l9 8" /><path d="M3 15l12 5M6 23l9-8" strokeWidth="2.500" /><circle cx="6" cy="23" r="1.500" /></> },
  { h: 0 },
  { h: 35, n: "块一", d: <><path d="M1 4l6-3v22l-6 3z" /><path d="M7 1h18M3 25h10" strokeDasharray="2 2" /><path d="M19 4l6-3v18l-6-2z" fill="#ddd" /><Plus x={19} y={19} /></> },
  { h: 36, n: "块二", d: <><path d="M1 4l6-3v22l-6 3zM19 17V4l6-3v16" /><path d="M7 1h18M3 25h10" strokeDasharray="2 2" /><Plus x={19} y={19} /></> },
  { h: 0 },
  { h: 36, n: "边界", d: <><path d="M1 1v24h13" strokeWidth="2" /><path d="M1 1h24v13" strokeDasharray="2 2" /><Plus x={19} y={19} /></> },
  { h: 0 },
  { h: 34, n: "工具", d: <><path d="M25 2L9 17M5 5l20 20" stroke="#3a3a3a" strokeWidth="3.500" /><path d="M1 7c1 4 5 4 8 2 1-3 0-7-4-8l2 4-3 2z" fill="#3a3a3a" stroke="none" /><path d="M9 17l-7 7" stroke="#2d7dd2" strokeWidth="6" /></> },
  { h: 9, n: "更多工具", w: 5, vh: 3, d: <path d="M0 0h5L2.500 3z" fill="#444" stroke="none" /> },
  { h: 43, n: "删除曲线", d: <><path d="M0 26C2 5 8 8 14 14s11 0 11-14" /><circle cx="19" cy="20" r="6" fill="#c9c9c9" stroke="#fff" /><path d="M17 18l4 4M21 18l-4 4" stroke="#fff" /></> },
];

const treeIcons = {
  root: <Icon w={16} c="#111" s={1}><path d="M1.500 12V2.500h3l1.500-2h4l1.500 2h3V12" fill="#fff3a8" /><path d="M5 3.500h6" /><path d="M2 8l5-4 7 2v7l-4 2z" fill="#8a86ee" stroke="#4a44d8" strokeDasharray="1 1" /><circle cx="6" cy="10.500" r="4.500" fill="#a9d0f5" stroke="#4a66d8" /></Icon>,
  iso: <Icon w={16} c="#22228a" s={1}><path d="M1 2l5 2v11l-5-3zM6 4l4-3v11l-4 3zM10 2l4 1v11l-8 1" fill="#fff" /></Icon>,
  props: <Icon w={16} c="#000" s={1}><path d="M.5.5h15v15H.5z" fill="#fff" /><path d="M0 2h16" strokeWidth="4" /><path d="M3 6h7M3 9.500h7M3 13h7" strokeWidth="1.500" /><path d="M11 6h3" stroke="red" strokeWidth="2" /><path d="M11 9.500h3" stroke="#0a0" strokeWidth="2" /><path d="M11 13h3" stroke="#00f" strokeWidth="2" /></Icon>,
  sheet: <Icon w={16} c="#222" s={1}><path d="M.5.5h15v15H.5z" fill="#f4f4f4" /><path d="M3.500 3.500h3v3h-3zM9.500 3.500h2l1 1v1l-1 1h-2zM3.500 8.500h3v3h-3zM8.500 12.500h7M8.500 12.500v3M12 12.500v3" /></Icon>,
  format: <Icon w={16} c="#000" s={1}><path d="M.5.500h15v14H.5zM3 2.500h10M8.500 10.500h7M8.500 10.500v4M12 10.500v4M8.500 12.500h7" fill="#f8f8f8" /></Icon>,
};
const Branch = ({ kind }: { kind: "line" | "box" }) => (
  <Icon w={26} h={18} c="#999" s={1}>
    <path d={kind === "line" ? "M5.500 0v18M5.500 9.500h10" : "M5.500 0v5M11 9.500h5"} strokeDasharray="1 1" />
    {kind === "box" && <><path d="M.5 4.500h10v10H.5z" fill="#fff" /><path d="M3 9.500h5" stroke="#000" /></>}
  </Icon>
);

const Pages = () => (
  <svg width="42" height="36" viewBox="0 0 42 36" aria-hidden="true">
    {([[24, 0, "3"], [12, 5, "2"], [0, 12, "1"]] as [number, number, string][]).map(([x, y, n]) => (
      <g key={n} transform={`translate(${x} ${y})`}>
        <path d="M.5.500h12l4.500 4.500v17H.5z" fill="#fdfdfd" stroke="#b5b5b5" />
        <path d="M12.500.500v4.500H17" fill="#e5e5e5" stroke="#b5b5b5" />
        <text x="11" y="19" fontSize="14" textAnchor="middle" fontFamily="DejaVu Sans, sans-serif" fill="#111">{n}</text>
      </g>
    ))}
  </svg>
);

type PickProps = { w: number; label: string; value: string; id: string; size?: number };
const Pick = ({ w, label, value, id, size = 12 }: PickProps) => (
  <SelectWrap $w={w} $size={size}>
    <select id={id} aria-label={label} defaultValue={value}>
      <option>{value}</option>
    </select>
    <Chevron />
  </SelectWrap>
);

const PrintDialog = () => (
  <Dialog role="dialog" aria-label="打印" onSubmit={(e) => e.preventDefault()}>
    <DialogHead>
      <h2>打印</h2>
      <PlainButton type="button" aria-label="关闭"><Cross c="#000" w={12} s={1} /></PlainButton>
    </DialogHead>
    <DialogBody>
      <Box>
        <legend>打印机</legend>
        <PrinterGrid>
          <label htmlFor="printer">名称:</label>
          <Pick id="printer" w={228} size={11} label="名称" value="\\192.168.1.6\HP Laser NS MFP 1005" />
          <DialogButton type="button" $w={88}>属性</DialogButton>
          <span>状态:</span>
          <span>准备就绪</span>
          <Choice><input type="checkbox" />打印为文件</Choice>
        </PrinterGrid>
      </Box>
      <Box>
        <legend>拷贝</legend>
        <CopyRow>
          <CopyLabel htmlFor="copies">拷贝份数:</CopyLabel>
          <Spinner>
            <input id="copies" type="text" defaultValue="1" />
            <SpinButtons>
              <button type="button" aria-label="增加"><Icon w={5} h={3} s={0}><path d="M0 3h5L2.500 0z" fill="#000" /></Icon></button>
              <button type="button" aria-label="减少"><Icon w={5} h={3} s={0}><path d="M0 0h5L2.500 3z" fill="#000" /></Icon></button>
            </SpinButtons>
          </Spinner>
          <Collate><Pages /><Pages /></Collate>
          <Choice $off><input type="checkbox" defaultChecked disabled />核对</Choice>
        </CopyRow>
      </Box>
      <Columns>
        <LeftColumn>
          <Box>
            <legend>打印区域</legend>
            <AreaRows>
              <Choice><input type="radio" name="area" />显示窗口</Choice>
              <Choice><input type="radio" name="area" />全部窗口</Choice>
              <Choice><input type="radio" name="area" defaultChecked />框选</Choice>
              <PickButton type="button" aria-label="选择区域">
                <Icon w={17} c="#333" s={1}>
                  <path d="M.5 2.500h14v8H.5z" strokeDasharray="1 1" />
                  <path d="M8 4v11l2.500-2.500L12 16l2-1-1.500-3.500H16z" fill="#000" stroke="none" />
                </Icon>
              </PickButton>
            </AreaRows>
          </Box>
          <Box>
            <legend>布局</legend>
            <LayoutRows>
              <Cell $at="1 / 1"><Choice $off><input type="radio" name="layout" disabled />偏置</Choice></Cell>
              <Cell $at="1 / 3"><label htmlFor="ox">X:</label></Cell>
              <Cell $at="1 / 4"><NumberBox id="ox" defaultValue="0.00" disabled /></Cell>
              <Cell $at="2 / 3"><label htmlFor="oy">Y:</label></Cell>
              <Cell $at="2 / 4"><NumberBox id="oy" defaultValue="0.00" disabled /></Cell>
              <Cell $at="3 / 1 / 4 / 5"><Choice $off><input type="radio" name="layout" disabled />中心对齐</Choice></Cell>
              <Cell $at="4 / 1 / 5 / 5" $pad={21}><Choice $off><input type="checkbox" disabled />水平</Choice></Cell>
              <Cell $at="5 / 1 / 6 / 5" $pad={21}><Choice $off><input type="checkbox" disabled />竖直</Choice></Cell>
              <Cell $at="6 / 1" $pad={2}><label htmlFor="dir">方向</label></Cell>
              <Cell $at="6 / 2 / 7 / 5" $pad={2}><Pick id="dir" w={72} label="方向" value="横向" /></Cell>
            </LayoutRows>
          </Box>
        </LeftColumn>
        <RightColumn>
          <ScaleBox>
            <legend>缩放</legend>
            <ScaleRows>
              <ScaleRadio><Choice><input type="radio" name="scale" defaultChecked />自适应页</Choice></ScaleRadio>
              <ScaleRadio><Choice><input type="radio" name="scale" />缩放</Choice></ScaleRadio>
              <span>宽度:</span><span />
              <span>高度:</span><span />
              <label htmlFor="unit">单位</label>
              <Pick id="unit" w={62} label="单位" value="mm" />
            </ScaleRows>
          </ScaleBox>
          <WhiteRow><Choice><input type="checkbox" />白色背景</Choice></WhiteRow>
          <Box>
            <legend>颜色和线宽</legend>
            <ModeRow>
              <label htmlFor="mode">模式:</label>
              <Pick id="mode" w={194} label="模式" value="黑/白" />
            </ModeRow>
          </Box>
        </RightColumn>
      </Columns>
    </DialogBody>
    <DialogFoot>
      <DialogButton type="button" $w={39}>帮助</DialogButton>
      <DialogButton type="button" $w={88}>通用设置</DialogButton>
      <DialogButton type="button" $w={74}>预览</DialogButton>
      <DialogButton type="submit" $w={70} $main>确定</DialogButton>
      <DialogButton type="button" $w={70}>取消</DialogButton>
    </DialogFoot>
  </Dialog>
);

const menus = ["文件", "编辑", "查看", "基准&曲线", "符号", "视图", "图纸", "组", "工具", "分析", "标准件", "窗口"];
const mdi = "#6f93c4";

export default function App() {
  return (
    <Window>
      <Global />
      <TopBar>
        <Logo><BrandMark size={16} text="16" /></Logo>
        <QuickBar>
          <QuickButton $w={22} aria-label="保存">{quick.save}</QuickButton>
          <QuickButton $w={20} aria-label="打开">{quick.open}</QuickButton>
          <Rule />
          {["part", "part2", "sheet", "asm"].map((k) => (
            <React.Fragment key={k}>
              <QuickButton $w={20} aria-label={k}>{quick[k]}</QuickButton>
              <QuickButton $w={10} aria-label={k + " menu"}><Drop /></QuickButton>
            </React.Fragment>
          ))}
          <Rule />
          <QuickButton $w={24} aria-label="清除">{quick.clear}</QuickButton>
          <Rule />
          <QuickButton $w={18} aria-label="撤销"><UndoArrow c="#3a3a3a" /></QuickButton>
          <QuickButton $w={8} aria-label="撤销列表"><Drop /></QuickButton>
          <QuickButton $w={19} aria-label="重做"><UndoArrow c="#bcbcbc" flip /></QuickButton>
          <QuickButton $w={8} aria-label="重做列表"><Drop /></QuickButton>
          <QuickButton $w={20} aria-label="刷新">
            <Icon w={16}><path d="M2 7c1-7 9-7 10-2M13 1v4H9M14 8c-1 4-3 4-5 4M11 10l-3 2 3 3" /><circle cx="5" cy="12" r="3" /></Icon>
          </QuickButton>
          <Rule />
          <QuickButton $w={25} aria-label="列表">
            <Icon w={17}><path d="M1 1h15v15H1zM1 3h15" /><path d="M4 7h2M4 10h2M4 13h2M8 7h6M8 10h6M8 13h6" strokeDasharray="2 1" /></Icon>
          </QuickButton>
        </QuickBar>
        <Menu>{menus.map((m) => <MenuLink href="#" key={m}>{m}</MenuLink>)}</Menu>
        <DocTitle>工程图0 : Sheet1</DocTitle>
        <SearchBox>
          <input type="text" placeholder="搜索" aria-label="搜索" />
          <Icon w={14} vb="0 0 15 15" c="#222" s={2}><circle cx="6" cy="6" r="4.500" /><path d="M9 9l5 5" strokeWidth="2.500" /></Icon>
        </SearchBox>
        <WinButton aria-label="最小化"><Dash c="#222" /></WinButton>
        <WinButton aria-label="还原"><Restore c="#222" /></WinButton>
        <WinButton aria-label="关闭"><Cross c="#222" /></WinButton>
      </TopBar>

      <Ribbon>
        <Rail><RailMark $hot /><RailMark /></Rail>
        <Group $w={368}>
          <Grip />
          <Big w={70} icon="multi">创建多个视图</Big>
          <Big w={50} icon="single">创建视图</Big>
          <Rule />
          <Big w={38} icon="section">剖面线</Big>
          <ToolGrid $cols="100px 86px">
            <Small icon="hatch">剖面线</Small><Small icon="local">局部剖视图</Small><Small icon="outline">轮廓</Small>
            <Small icon="broken">断裂视图</Small><Small icon="crop">裁剪视图</Small>
          </ToolGrid>
        </Group>
        <Group $w={650}>
          <Grip />
          <FontColumn>
            <SizeBox>
              <input type="text" defaultValue="5.000" aria-label="字高" />
              <button type="button" aria-label="字高列表"><Drop c="#999" /></button>
            </SizeBox>
            <FontTool type="button">
              <Icon w={16} s={1.500}><path d="M2 15h5M5 1h10l-1 3M7 1L4 15M6 8h6" /></Icon>字体
            </FontTool>
          </FontColumn>
          <Rule />
          <Big w={38} icon="dim">标注</Big>
          <Big w={48} icon="ordinate">坐标标注</Big>
          <ToolGrid $cols="67px 75px">
            <Small icon="text">文本</Small><Small icon="id">ID号</Small><Small icon="arrow">箭头</Small>
            <Small icon="centerline">中心线</Small><Small icon="sym">对称线</Small><Small icon="mark">标记</Small>
          </ToolGrid>
          <Rule />
          <ToolGrid $cols="89px 100px 80px">
            <Small icon="gtol">几何公差</Small><Small icon="datum">几何基准</Small><Small icon="chain">连续标注</Small>
            <Small icon="target">基准目标</Small><Small icon="rough">表面粗糙度</Small><Small icon="finish">表面光洁度</Small>
            <Small icon="weld">焊接符号</Small>
          </ToolGrid>
        </Group>
        <Group $w={93}>
          <Grip />
          <Big w={37} icon="bom">BOM</Big>
          <Big w={37} icon="hole">孔表</Big>
        </Group>
        <Group $w={341}>
          <Grip />
          <Big w={49} icon="center">自动中心</Big>
          <Big w={70} icon="idno">自动创建ID号</Big>
          <Big w={61} icon="tag">自动孔标签</Big>
          <Big w={70} icon="autoord">自动坐标标注</Big>
          <Big w={72} icon="autolist">自动坐标列表</Big>
        </Group>
        <Group $w={119}>
          <Grip />
          <ToolGrid $cols="100px">
            <Small icon="place">放置群组</Small><Small icon="remove">删除主群组</Small><Small icon="create">创建群组</Small>
          </ToolGrid>
        </Group>
        <Group $w={92}>
          <Grip />
          <ViewGrid>
            <PlainButton aria-label="缩放全部"><Icon><path d="M1 1h24v24H1zM1 3h24" /><circle cx="14" cy="13" r="6" strokeWidth="2" /><path d="M17 18l4 7" strokeWidth="3" /></Icon></PlainButton>
            <PlainButton aria-label="缩放窗口"><Icon><path d="M1 1h24v24H1z" strokeDasharray="2 2" /><circle cx="14" cy="13" r="6" strokeWidth="2" /><path d="M17 18l4 7" strokeWidth="3" /></Icon></PlainButton>
            <PlainButton aria-label="查看实体"><Icon><path d="M1 5l9-4 6 3v11l-9 4-6-4zM1 5l6 3 9-4M7 8v11" fill="#e4e4e4" /><circle cx="17" cy="16" r="6" fill="#fff" strokeWidth="2" /><path d="M21 20l4 6" strokeWidth="3" /></Icon></PlainButton>
            <PlainButton aria-label="鼠标"><Icon><path d="M5 5h16v12a8 8 0 0 1-16 0z" /><path d="M5 14h16v3a8 8 0 0 1-16 0z" fill="#c9c9c9" /><path d="M10 5v9M16 5v9M5 14h16" /><path d="M13 0l4 4H9zM0 13l4-3v6zM26 13l-4-3v6z" fill={G} stroke="none" /></Icon></PlainButton>
          </ViewGrid>
        </Group>
        <Group $w={126}>
          <Grip />
          <Palette>
            {["#f00", "#0f0", "#00f", "#ff0", "#0ff", "#f0f", "#fff", "#888"].map((c) => <Swatch key={c} $c={c} aria-label={c} />)}
            <PaletteRule />
            {["#f1f1f1", "#ffcccc", "#ffe6bf", "#ffffc4", "#deedd0", "#ccffe0", "#a9eef7", "#b5cdff"].map((c) => <Swatch key={c} $c={c} aria-label={c} />)}
          </Palette>
          <PaletteTools>
            <Spectrum />
            <Icon w={16}><path d="M1 15l2-5 6-6 3 3-6 6z" /><path d="M9 3l4 4M11 5l3-3" strokeWidth="3" /></Icon>
          </PaletteTools>
          <Rule />
          <BrushTools>
            <Icon w={16} h={8}><path d="M0 1h16M0 6h16" strokeDasharray="3 1" /></Icon>
            <Icon w={16}><path d="M1 9l5-3 5 5-3 5z" fill="#ddd" /><path d="M8 8l7-7" strokeWidth="2.500" /></Icon>
          </BrushTools>
        </Group>
        <MdiButtons>
          <MdiButton aria-label="关闭图纸"><Cross c={mdi} /></MdiButton>
          <MdiButton aria-label="还原图纸"><Restore c={mdi} /></MdiButton>
          <MdiButton aria-label="最小化图纸"><Dash c={mdi} /></MdiButton>
        </MdiButtons>
        <Upload type="button">
          <UploadMark>
            <Icon w={22} h={18} c="#fff" s={2.600}><circle cx="11" cy="5" r="3.500" /><circle cx="5.500" cy="12" r="4" /><circle cx="16" cy="12" r="4" /></Icon>
          </UploadMark>
          <span>拖拽上传</span>
        </Upload>
      </Ribbon>

      <Main>
        <FeatureDock>
          <DockHead>
            <h2>特征</h2>
            <PlainButton aria-label="固定"><Icon w={9} c="#666" s={1}><path d="M3 0v5M6 0v5M5.500 0v5M1 5.500h7M4.500 6v3M3 .5h3" /></Icon></PlainButton>
            <PlainButton aria-label="关闭面板"><Cross c="#666" w={8} s={1.300} /></PlainButton>
          </DockHead>
          <TreePane>
            <TreeRow $root>{treeIcons.root}<TreeLabel>Drawing</TreeLabel></TreeRow>
            <TreeRow><Branch kind="line" />{treeIcons.iso}<TreeLabel>ISO</TreeLabel></TreeRow>
            <TreeRow><Branch kind="line" />{treeIcons.props}<TreeLabel $cjk>属性</TreeLabel></TreeRow>
            <TreeRow><Branch kind="box" />{treeIcons.sheet}<TreeLabel $bold>Sheet1</TreeLabel></TreeRow>
            <TreeRow>
              <Icon w={52} h={18} c="#999" s={1}><path d="M31.500 0v9.500h10" strokeDasharray="1 1" /></Icon>
              {treeIcons.format}<TreeLabel $on>A4_H_ANSI</TreeLabel>
            </TreeRow>
          </TreePane>
          <Tabs>
            <Tab $on>特征树</Tab>
            <Tab>集合</Tab>
          </Tabs>
        </FeatureDock>
        <Canvas>
          <SheetDrawing />
          <ActiveNote>'Sheet1' 图纸 已激活</ActiveNote>
        </Canvas>
        <SketchDock>
          <DockTabs><DockTab $hot /><DockTab /></DockTabs>
          <SketchPanel>
            <SketchGrip>
              <svg width="16" height="7" viewBox="0 0 16 7" fill="#8fb0c8" aria-hidden="true">
                {[0, 4, 8, 12].map((x) => <path key={x} d={`M${x} 0h3v2h-3zM${x} 4h3v2h-3z`} />)}
              </svg>
            </SketchGrip>
            {sketch.map((t, i) =>
              t.n ? (
                <SketchTool key={i} type="button" $h={t.h} aria-label={t.n}>
                  <Icon w={t.w || 26} h={t.vh || 26}>{t.d}</Icon>
                </SketchTool>
              ) : (
                <SketchRule key={i} />
              )
            )}
          </SketchPanel>
        </SketchDock>
      </Main>

      <StatusBar>
        <p>选择图素然后执行命令,或者双击图素进行编辑.</p>
        <StatusCell $w={151}>'Sheet1' 图纸 已激活</StatusCell>
        <StatusCell $w={302} />
      </StatusBar>

      <Taskbar>
        <Task aria-label="开始"><Icon w={16} s={0}><path d="M0 2.500L7 1.500v6H0zM8 1.300L16 0v7.500H8zM0 8.500h7v6l-7-1zM8 8.500h8V16l-8-1.300z" fill="#fff" /></Icon></Task>
        <Task aria-label="搜索任务"><Icon w={17} c="#fff" s={1.300}><circle cx="10.500" cy="6" r="5.300" /><path d="M7 10l-6 7" /></Icon></Task>
        <Task aria-label="任务视图"><Icon w={17} c="#fff" s={1.200}><path d="M1 4h10v9H1zM1 0v2h10V0M1 17v-2h10v2M15 0v17" /><path d="M14 6h2v3h-2z" fill="#fff" /></Icon></Task>
        <Task aria-label="计算器"><Icon w={18} h={23} s={0}><path d="M0 0h18v23H0z" fill="#fff" /><path d="M2.500 2.500h13v3.500h-13zM3 9h2v2H3zM8 9h2v2H8zM13 9h2v2h-2zM3 13h2v2H3zM8 13h2v2H8zM13 13h2v2h-2zM3 17h2v2H3zM8 17h2v2H8zM13 17h2v2h-2z" fill="#22383f" /></Icon></Task>
        <Task $open aria-label="画图">
          <Icon w={24} s={0}><path d="M2 15c-2-6 5-10 11-9 7 0 9 5 7 10-3 7-9 8-10 5 0-2-1-3-3-3s-4 0-5-3z" fill="#b9d9ee" /><circle cx="7" cy="10" r="2" fill="#5aa9e6" /><circle cx="12" cy="9" r="2" fill="#f2c230" /><circle cx="5" cy="14" r="2" fill="#e2452f" /><circle cx="10" cy="14" r="2" fill="#5cb85c" /><path d="M13 23l4-17 3-5 3 1-2 5-6 16z" fill="#d98a3a" /></Icon>
        </Task>
        <Task $open aria-label="CAD">
          <Icon w={22} h={24} s={0}><path d="M20 1C10-2 1 4 1 12s7 13 17 11v-5C11 19 8 16 8 12s4-7 12-5z" fill="#b6e61d" /><path d="M20 7C12 5 8 8 8 12s3 8 10 6v-3c-6 1-6-6 2-5z" fill="#f47b20" /><path d="M14 1l6-1v7l-5 1z" fill="#9aa0a0" /></Icon>
        </Task>
        <Task $open aria-label="表格">
          <Icon w={22} s={0}><path d="M1 1h20v19l-8 1H1z" fill="#e9f3ea" /><path d="M1 1h20v3H1z" fill="#2f9a4f" /><path d="M1 1h12v14H1z" fill="#3d9b57" /><path d="M3 3h3l2 3 2-3h3L9 8l4 6h-3l-2-4-2 4H3l4-6z" fill="#fff" /><path d="M14 6h6M14 9h6M14 12h6M4 17h14" stroke="#4ea869" strokeWidth="1" /></Icon>
        </Task>
        <Task $open aria-label="浏览器">
          <Icon w={24} c="#35b6ee" s={4.200}><path d="M20 17c-3 5-14 5-14-4 0-8 14-9 14 0H7" /><path d="M3 22C-2 14 12-2 22 3" stroke="#f5c731" strokeWidth="2" /></Icon>
        </Task>
        <Task $on aria-label="工程图"><BrandMark size={25} text="16" light /></Task>
        <Tray>
          <TrayButton aria-label="网盘"><Icon w={16} c="#3da9f0" s={1.600}><rect width="16" height="16" rx="3" fill="#fff" stroke="none" /><circle cx="8" cy="5.500" r="2.300" stroke="#f06a6a" /><circle cx="5" cy="9.500" r="2.400" /><circle cx="11" cy="9.500" r="2.400" /></Icon></TrayButton>
          <TrayButton aria-label="设计"><Icon w={14} s={0}><path d="M1 13L6 2h2L5 13z" fill="#6fae3c" /><path d="M6 2h3l5 11h-4z" fill="#1c7fd6" /></Icon></TrayButton>
          <TrayButton aria-label="安全"><Icon w={16} s={0}><circle cx="8" cy="8" r="8" fill="#f6d80c" /><path d="M3 2a8 8 0 0 1 13 6c-2-4-7-6-13-6z" fill="#39a935" /><path d="M4 8h8M8 4v8" stroke="#1f7a1f" strokeWidth="2" /></Icon></TrayButton>
          <TrayButton aria-label="输入法"><Icon w={16} c="#fff" s={2}><path d="M0 0h16v16H0z" fill="#f0661a" stroke="none" /><path d="M3 5h10v5H3zM8 2v12" /></Icon></TrayButton>
          <TrayButton aria-label="显卡"><Icon w={16} c="#76b900" s={1}><path d="M0 0h16v16H0z" fill="#1c1c1c" stroke="none" /><path d="M7 4h6v8H7z" fill="#76b900" stroke="none" /><path d="M4 8c2-3 5-3 7 0-2 3-5 3-7 0z" stroke="#3c5d00" /><path d="M7 5C4 5 3 7 2 8c1 1 2 3 5 3" /></Icon></TrayButton>
          <TrayButton aria-label="网络"><Icon w={17} h={15} c="#fff" s={1.200}><path d="M5 3h11v8H4V7M8 14h5M10 11v3M1 1h4v4H1zM3 5v9h3" /></Icon></TrayButton>
          <TrayButton aria-label="音量"><Icon w={17} h={14} c="#fff" s={1.200}><path d="M1 5h2l4-4v12L3 9H1zM9 5c1 1 1 3 0 4M11 3c2 2 2 6 0 8M14 1c3 3 3 9 0 12" /></Icon></TrayButton>
          <TrayButton>中</TrayButton>
          <TrayButton $w={34} aria-label="搜狗"><Icon w={16} c="#fff" s={2.200}><rect x=".5" y=".5" width="15" height="15" rx="2" fill="#e8471c" stroke="#f5d9cf" strokeWidth="1" /><path d="M12 4H6c-3 0-2 4 0 4h4c3 0 3 4 0 4H4" /></Icon></TrayButton>
          <TrayButton $w={34}><Badge>93</Badge></TrayButton>
          <Clock>15:53<br />2023/11/27</Clock>
          <TrayButton $w={46} aria-label="通知"><Icon w={17} h={16} c="#fff" s={1.300}><path d="M1 1h15v11h-5l-2.500 3L6 12H1z" /></Icon></TrayButton>
          <ShowDesktop />
        </Tray>
      </Taskbar>

      <PrintDialog />
    </Window>
  );
}
